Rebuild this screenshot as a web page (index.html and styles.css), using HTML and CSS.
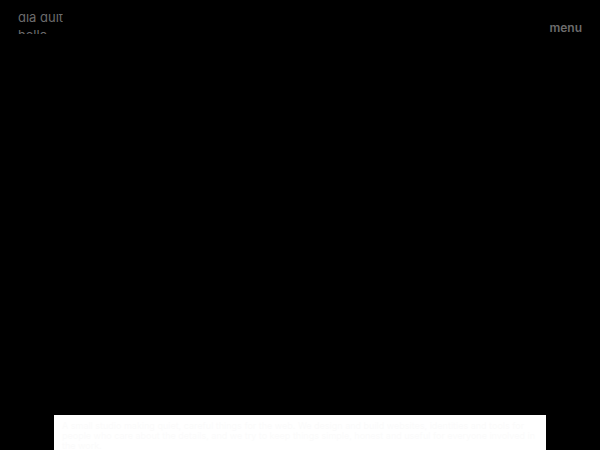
FILE: index.html
```html
<!DOCTYPE html>
<html lang="en">
<head>
<meta charset="utf-8">
<title>dia duit</title>
<link rel="stylesheet" href="styles.css">
</head>
<body>
<header class="site-header">
  <a class="logo" href="#">
    <span class="logo-track">
      <span class="logo-line">dia duit</span>
      <span class="logo-line">hello</span>
    </span>
  </a>
  <button class="menu-btn" type="button">menu</button>
</header>
<main class="hero">
  <section class="card">
    <p class="card-text">A small studio making quiet, careful things for the web. We design and build websites, identities and tools for people who care about the details, and we try to keep things simple, honest and useful for everyone involved in the work.</p>
  </section>
</main>
</body>
</html>
```
FILE: styles.css
```css
html, body {
  margin: 0;
  padding: 0;
  background: #000;
  height: 100%;
  overflow: hidden;
}
body {
  font-family: Inter, "Liberation Sans", sans-serif;
  display: flex;
  flex-direction: column;
}
.site-header {
  display: flex;
  justify-content: space-between;
  align-items: flex-start;
  padding: 14px 18px 0 18px;
}
.logo {
  display: block;
  height: 20px;
  overflow: hidden;
  text-decoration: none;
  color: #6c6c6c;
  font-size: 13px;
}
.logo-track {
  display: flex;
  flex-direction: column;
  margin-top: -5px;
}
.logo-line {
  line-height: 17.5px;
  display: block;
}
.menu-btn {
  background: none;
  border: 0;
  padding: 0;
  margin-top: 6px;
  color: #6c6c6c;
  font-family: Inter, "Liberation Sans", sans-serif;
  font-weight: 600;
  font-size: 12px;
  line-height: 16px;
  cursor: pointer;
}
.hero {
  flex: 1;
  display: flex;
  flex-direction: column;
  justify-content: flex-end;
  align-items: center;
}
.card {
  width: 492px;
  height: 35px;
  background: #fff;
  box-sizing: border-box;
  padding: 6px 8px 0 8px;
  overflow: hidden;
}
.card-text {
  margin: 0;
  font-size: 9px;
  line-height: 10px;
  color: #fbfbfb;
}
```
